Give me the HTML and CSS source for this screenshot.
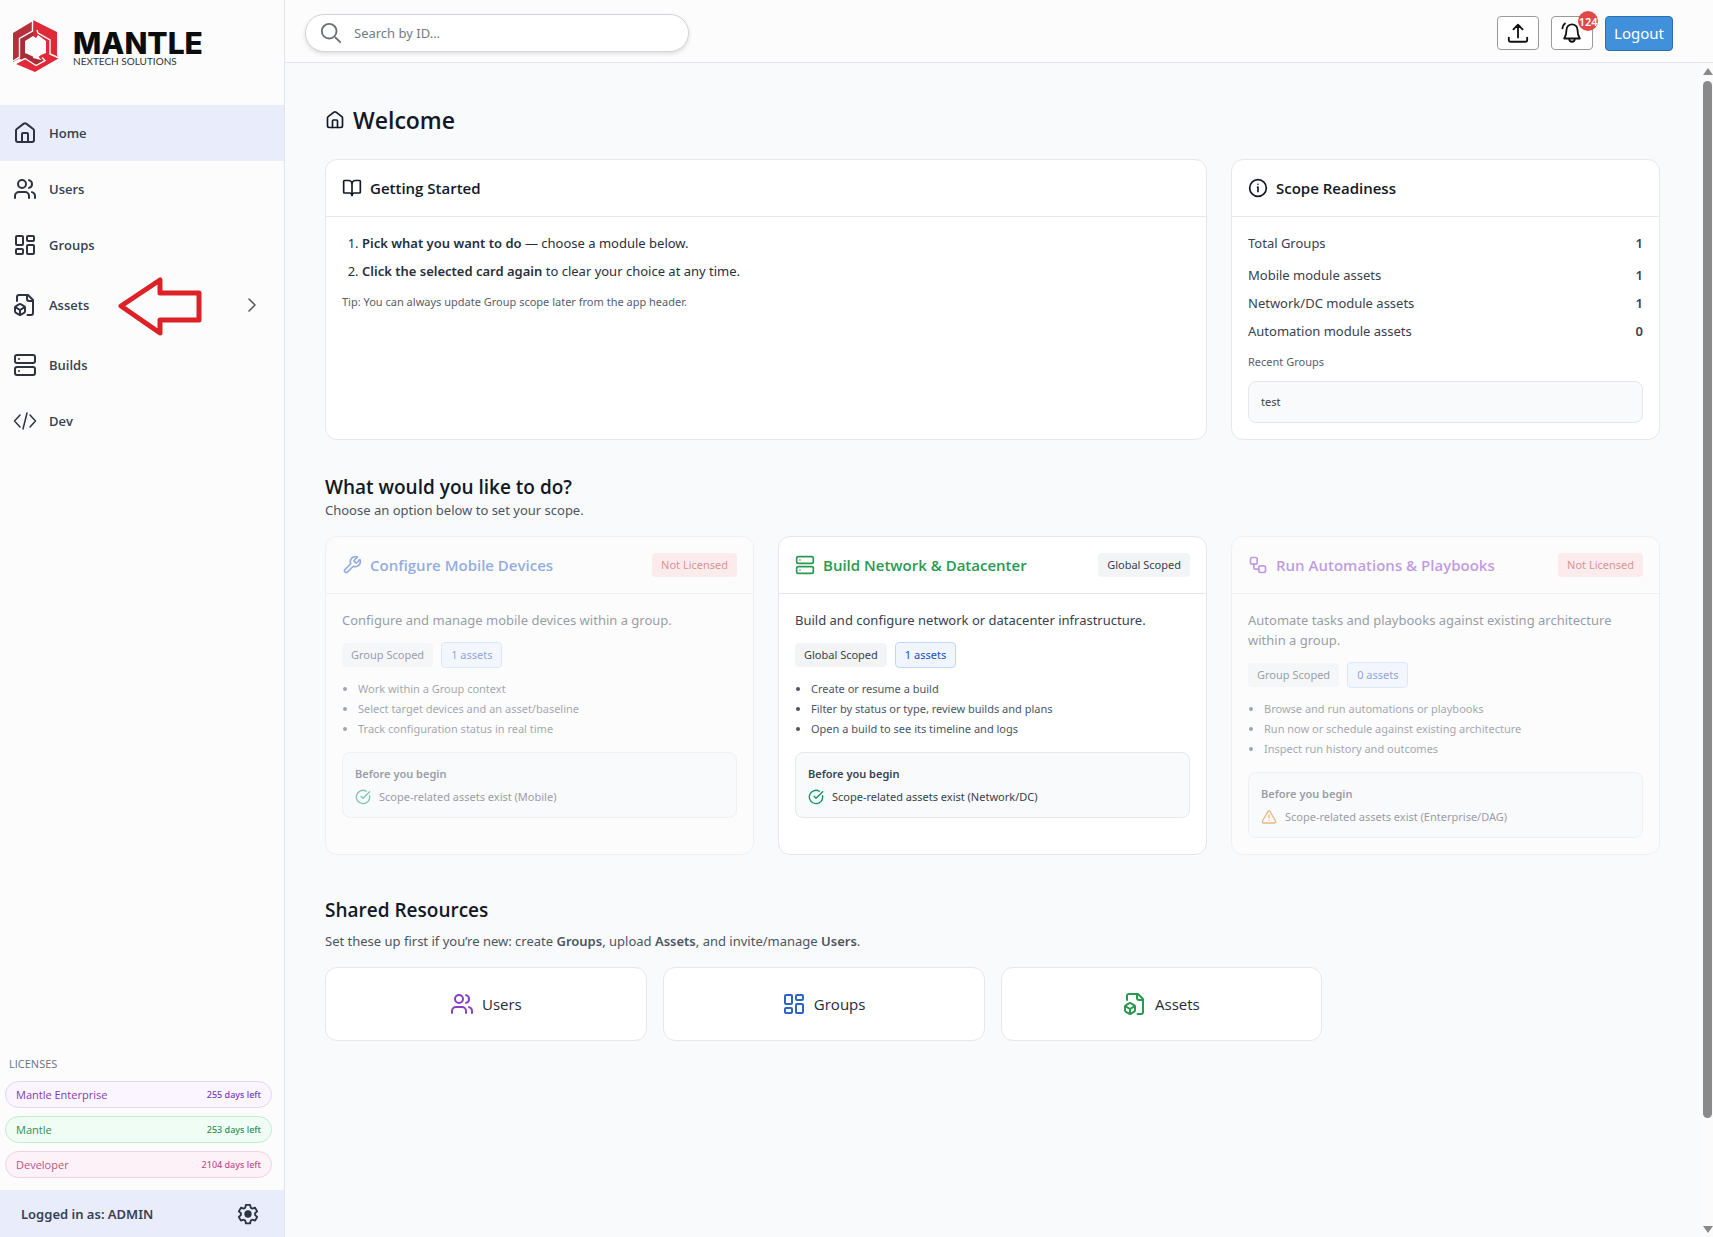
FILE: index.html
```
<!DOCTYPE html>
<html lang="en">
<head>
  <meta charset="UTF-8">
  <meta name="viewport" content="width=device-width, initial-scale=1.0">
  <title>Mantle - Home</title>
  <link rel="stylesheet" href="styles.css">
</head>
<body>
  <!-- Icon sprite -->
  <svg class="sprite" aria-hidden="true">
    <symbol id="i-home" viewBox="0 0 24 24"><path d="M3 9.6a2 2 0 0 1 .8-1.6l7-5.4a2 2 0 0 1 2.4 0l7 5.4a2 2 0 0 1 .8 1.6V19a2 2 0 0 1-2 2H5a2 2 0 0 1-2-2Z"/><path d="M9 21v-8a1 1 0 0 1 1-1h4a1 1 0 0 1 1 1v8"/></symbol>
    <symbol id="i-users" viewBox="0 0 24 24"><path d="M16 21v-2a4 4 0 0 0-4-4H6a4 4 0 0 0-4 4v2"/><circle cx="9" cy="7" r="4"/><path d="M22 21v-2a4 4 0 0 0-3-3.87"/><path d="M16 3.13a4 4 0 0 1 0 7.75"/></symbol>
    <symbol id="i-groups" viewBox="0 0 24 24"><rect width="7" height="9" x="3" y="3" rx="1"/><rect width="7" height="5" x="14" y="3" rx="1"/><rect width="7" height="9" x="14" y="12" rx="1"/><rect width="7" height="5" x="3" y="16" rx="1"/></symbol>
    <symbol id="i-assets" viewBox="0 0 24 24"><path d="M14.5 22H18a2 2 0 0 0 2-2V7l-5-5H6a2 2 0 0 0-2 2v4"/><path d="M14 2v4a2 2 0 0 0 2 2h4"/><path d="M3 13.1a2 2 0 0 0-1 1.76v3.24a2 2 0 0 0 .97 1.78L6 21.7a2 2 0 0 0 2.03.01L11 19.9a2 2 0 0 0 1-1.76V14.9a2 2 0 0 0-.97-1.78L8 11.3a2 2 0 0 0-2.03-.01Z"/><path d="M7 17v5"/><path d="M11.7 14.2 7 17l-4.7-2.8"/></symbol>
    <symbol id="i-server" viewBox="0 0 24 24"><rect width="20" height="8" x="2" y="2" rx="2"/><rect width="20" height="8" x="2" y="14" rx="2"/><path d="M6 6h.01M6 18h.01"/></symbol>
    <symbol id="i-code" viewBox="0 0 24 24"><path d="m7 6-5.500 6L7 18M17 6l5.500 6L17 18M14 4l-4 16"/></symbol>
    <symbol id="i-book" viewBox="0 0 24 24"><path d="M12 7v14"/><path d="M3 18a1 1 0 0 1-1-1V4a1 1 0 0 1 1-1h5a4 4 0 0 1 4 4 4 4 0 0 1 4-4h5a1 1 0 0 1 1 1v13a1 1 0 0 1-1 1h-6a3 3 0 0 0-3 3 3 3 0 0 0-3-3z"/></symbol>
    <symbol id="i-info" viewBox="0 0 24 24"><circle cx="12" cy="12" r="10"/><path d="M12 7.500h.01M11.500 11h.5v5.500"/></symbol>
    <symbol id="i-wrench" viewBox="0 0 24 24"><path d="M14.700 6.300a1 1 0 0 0 0 1.400l1.600 1.600a1 1 0 0 0 1.400 0l3.770-3.770a6 6 0 0 1-7.940 7.940l-6.910 6.910a2.120 2.120 0 0 1-3-3l6.910-6.910a6 6 0 0 1 7.940-7.940l-3.760 3.760z"/></symbol>
    <symbol id="i-flow" viewBox="0 0 24 24"><rect width="8" height="8" x="3" y="3" rx="2"/><path d="M7 11v4a2 2 0 0 0 2 2h4"/><rect width="8" height="8" x="13" y="13" rx="2"/></symbol>
    <symbol id="i-check" viewBox="0 0 24 24"><path d="M21.800 10A10 10 0 1 1 17 3.330"/><path d="m9 11 3 3L22 4"/></symbol>
    <symbol id="i-warn" viewBox="0 0 24 24"><path d="m21.730 18-8-14a2 2 0 0 0-3.480 0l-8 14A2 2 0 0 0 4 21h16a2 2 0 0 0 1.730-3"/><path d="M12 9v4M12 17h.01"/></symbol>
    <symbol id="i-search" viewBox="0 0 24 24"><circle cx="10" cy="10" r="8"/><path d="m17 17 5 5"/></symbol>
    <symbol id="i-upload" viewBox="0 0 24 24"><path d="M12 17V3M7 8l5-5 5 5M2 17v2.500a2 2 0 0 0 2 2h16a2 2 0 0 0 2-2V17"/></symbol>
    <symbol id="i-bell" viewBox="0 0 24 24"><path d="M12 2.500a6 6 0 0 0-6 6c0 5-.8 7-2.500 9.500h17C18.800 15.500 18 13.500 18 8.500a6 6 0 0 0-6-6Z"/><path d="M9 18.500a3 3 0 0 0 6 0M1.500 7c.2-2.200 1.200-4 2.800-5.300"/></symbol>
    <symbol id="i-gear" viewBox="0 0 24 24"><path d="M9.700 2h4.600l.7 3.100 1.700 1 3-1 2.300 4-2.300 2.100v1.900l2.300 2.100-2.300 4-3-1-1.700 1-.7 3.100H9.700L9 19.200l-1.700-1-3 1-2.300-4 2.300-2.100v-1.900L2 9.100l2.300-4 3 1 1.700-1Z"/><circle cx="12" cy="12" r="3" fill="currentColor"/></symbol>
    <symbol id="i-chevron" viewBox="0 0 24 24"><path d="m8 4 8 8-8 8"/></symbol>
  </svg>

  <!-- Sidebar -->
  <aside class="sidebar">
    <a class="brand" href="#">
      <svg class="brand-mark" viewBox="0 0 48 54" aria-hidden="true">
        <path fill="#b5303a" d="M21 1v30L1 42V13Z"/>
        <path fill="#dc2a36" d="M21 0l24 12v23l2 3-13 7-13-14Z"/>
        <path fill="#ab2c36" d="M8 18l13-7v27l12 3-10 6-15-8Z"/>
        <path fill="#e3283a" d="M4 44l9-5 11 7 9-5 1-3h13v0L23 52Z"/>
        <path fill="#fcfcfd" d="M21 16l3 2 2-3 8 6v12l-5 2-4 3-3-1-9-4V21Z"/>
        <path fill="none" stroke="#fcfcfd" stroke-width="1.4" d="M20.500 0v11L7.500 18.500V37L1 41M25 10l1 3 12 7v14l9 4M3 43.500l10-5 11 7 9-5-3-3"/>
      </svg>
      <span class="brand-text">
        <span class="brand-name">MANTLE</span>
        <span class="brand-sub">NEXTECH SOLUTIONS</span>
      </span>
    </a>

    <nav class="nav">
      <a class="nav-item active" href="#"><svg class="icon"><use href="#i-home"/></svg>Home</a>
      <a class="nav-item" href="#"><svg class="icon"><use href="#i-users"/></svg>Users</a>
      <a class="nav-item" href="#"><svg class="icon"><use href="#i-groups"/></svg>Groups</a>
      <a class="nav-item nav-parent" href="#">
        <svg class="icon"><use href="#i-assets"/></svg>Assets
        <svg class="nav-arrow" viewBox="0 0 86 60" aria-hidden="true"><path d="M4 30 43 4v13h39v27H43v13Z"/></svg>
        <svg class="icon nav-chevron"><use href="#i-chevron"/></svg>
      </a>
      <a class="nav-item" href="#"><svg class="icon"><use href="#i-server"/></svg>Builds</a>
      <a class="nav-item" href="#"><svg class="icon thin"><use href="#i-code"/></svg>Dev</a>
    </nav>

    <section class="licenses">
      <h2>LICENSES</h2>
      <div class="license purple"><span>Mantle Enterprise</span><small>255 days left</small></div>
      <div class="license green"><span>Mantle</span><small>253 days left</small></div>
      <div class="license pink"><span>Developer</span><small>2104 days left</small></div>
    </section>

    <footer class="account">
      <span>Logged in as: ADMIN</span>
      <button class="gear" aria-label="Settings"><svg class="icon"><use href="#i-gear"/></svg></button>
    </footer>
  </aside>

  <div class="page">
    <header class="topbar">
      <label class="search">
        <svg class="icon"><use href="#i-search"/></svg>
        <input type="text" placeholder="Search by ID..." aria-label="Search by ID">
      </label>
      <div class="actions">
        <button class="icon-btn" aria-label="Upload"><svg class="icon"><use href="#i-upload"/></svg></button>
        <button class="icon-btn" aria-label="Notifications"><svg class="icon"><use href="#i-bell"/></svg><span class="badge">124</span></button>
        <button class="logout">Logout</button>
      </div>
    </header>

    <div class="scroller">
      <main class="content">
        <h1><svg class="icon"><use href="#i-home"/></svg>Welcome</h1>

        <div class="grid">
          <section class="card wide">
            <div class="card-head"><h3><svg class="icon"><use href="#i-book"/></svg>Getting Started</h3></div>
            <div class="card-body">
              <ol class="steps">
                <li><strong>Pick what you want to do</strong> — choose a module below.</li>
                <li><strong>Click the selected card again</strong> to clear your choice at any time.</li>
              </ol>
              <p class="note">Tip: You can always update Group scope later from the app header.</p>
            </div>
          </section>

          <section class="card">
            <div class="card-head"><h3><svg class="icon"><use href="#i-info"/></svg>Scope Readiness</h3></div>
            <div class="card-body">
              <dl class="stats">
                <div class="total"><dt>Total Groups</dt><dd>1</dd></div>
                <div><dt>Mobile module assets</dt><dd>1</dd></div>
                <div><dt>Network/DC module assets</dt><dd>1</dd></div>
                <div><dt>Automation module assets</dt><dd>0</dd></div>
              </dl>
              <p class="note">Recent Groups</p>
              <div class="recent">test</div>
            </div>
          </section>
        </div>

        <h2 class="section-title">What would you like to do?</h2>
        <p class="lead">Choose an option below to set your scope.</p>

        <div class="grid modules">
          <section class="card disabled">
            <div class="card-head">
              <h3 class="blue"><svg class="icon"><use href="#i-wrench"/></svg>Configure Mobile Devices</h3>
              <span class="tag red">Not Licensed</span>
            </div>
            <div class="card-body">
              <p>Configure and manage mobile devices within a group.</p>
              <div class="tags"><span class="tag">Group Scoped</span><span class="tag count">1 assets</span></div>
              <ul class="features">
                <li>Work within a Group context</li>
                <li>Select target devices and an asset/baseline</li>
                <li>Track configuration status in real time</li>
              </ul>
              <div class="before">
                <h4>Before you begin</h4>
                <p><svg class="icon ok"><use href="#i-check"/></svg>Scope-related assets exist (Mobile)</p>
              </div>
            </div>
          </section>

          <section class="card">
            <div class="card-head">
              <h3 class="green"><svg class="icon"><use href="#i-server"/></svg>Build Network &amp; Datacenter</h3>
              <span class="tag">Global Scoped</span>
            </div>
            <div class="card-body">
              <p>Build and configure network or datacenter infrastructure.</p>
              <div class="tags"><span class="tag">Global Scoped</span><span class="tag count">1 assets</span></div>
              <ul class="features">
                <li>Create or resume a build</li>
                <li>Filter by status or type, review builds and plans</li>
                <li>Open a build to see its timeline and logs</li>
              </ul>
              <div class="before">
                <h4>Before you begin</h4>
                <p><svg class="icon ok"><use href="#i-check"/></svg>Scope-related assets exist (Network/DC)</p>
              </div>
            </div>
          </section>

          <section class="card disabled">
            <div class="card-head">
              <h3 class="purple"><svg class="icon"><use href="#i-flow"/></svg>Run Automations &amp; Playbooks</h3>
              <span class="tag red">Not Licensed</span>
            </div>
            <div class="card-body">
              <p>Automate tasks and playbooks against existing architecture within a group.</p>
              <div class="tags"><span class="tag">Group Scoped</span><span class="tag count">0 assets</span></div>
              <ul class="features">
                <li>Browse and run automations or playbooks</li>
                <li>Run now or schedule against existing architecture</li>
                <li>Inspect run history and outcomes</li>
              </ul>
              <div class="before">
                <h4>Before you begin</h4>
                <p><svg class="icon warn"><use href="#i-warn"/></svg>Scope-related assets exist (Enterprise/DAG)</p>
              </div>
            </div>
          </section>
        </div>

        <h2 class="section-title shared">Shared Resources</h2>
        <p class="lead">Set these up first if you’re new: create <strong>Groups</strong>, upload <strong>Assets</strong>, and invite/manage <strong>Users</strong>.</p>

        <div class="tiles">
          <a class="tile" href="#"><svg class="icon purple"><use href="#i-users"/></svg>Users</a>
          <a class="tile" href="#"><svg class="icon blue"><use href="#i-groups"/></svg>Groups</a>
          <a class="tile" href="#"><svg class="icon green"><use href="#i-assets"/></svg>Assets</a>
        </div>
      </main>

      <div class="scrollbar" aria-hidden="true">
        <span class="scroll-up"></span>
        <span class="scroll-thumb"></span>
        <span class="scroll-down"></span>
      </div>
    </div>
  </div>
</body>
</html>
```
FILE: styles.css
```
* {
  box-sizing: border-box;
}

body {
  margin: 0;
  min-height: 100vh;
  display: flex;
  font-family: "Noto Sans", "Open Sans", sans-serif;
  font-size: 13px;
  line-height: 20px;
  color: #374151;
  background-color: #f9fafc;
}

h1, h2, h3, h4, p, ul, ol, dl, dd {
  margin: 0;
  padding: 0;
}

h1, h2, h3 {
  font-family: "Open Sans", sans-serif;
}

a {
  color: inherit;
  text-decoration: none;
}

button, input {
  font-family: inherit;
}

strong {
  font-weight: 600;
}

.sprite {
  position: absolute;
  width: 0;
  height: 0;
}

.icon {
  width: 24px;
  height: 24px;
  flex-shrink: 0;
  fill: none;
  stroke: currentColor;
  stroke-width: 2;
  stroke-linecap: round;
  stroke-linejoin: round;
}

.icon.thin {
  stroke-width: 1.5;
}

/* Sidebar */
.sidebar {
  width: 285px;
  flex-shrink: 0;
  display: flex;
  flex-direction: column;
  background-color: #fcfcfd;
  border-right: 1px solid #e2e4ea;
}

.brand {
  height: 105px;
  padding: 20px 12px;
  display: flex;
  align-items: flex-start;
  gap: 13px;
}

.brand-mark {
  width: 48px;
  height: 54px;
}

.brand-text {
  display: flex;
  flex-direction: column;
  padding-top: 8px;
}

.brand-name {
  font-family: Inter, sans-serif;
  font-size: 30px;
  font-weight: 800;
  line-height: 30px;
  color: #0a0d0d;
}

.brand-sub {
  font-family: Lato, sans-serif;
  font-size: 10px;
  line-height: 6px;
  color: #333;
}

.nav-item {
  position: relative;
  height: 56px;
  padding: 0 13px;
  display: flex;
  align-items: center;
  gap: 12px;
  font-family: "Open Sans", sans-serif;
  font-weight: 600;
  color: #374151;
}

.nav-item .icon {
  color: #2d3340;
}

.nav-item.active {
  background-color: #e9ecfb;
}

.nav-parent {
  height: 64px;
}

.nav-item .nav-chevron {
  width: 18px;
  height: 18px;
  margin-left: auto;
  margin-right: 10px;
  color: #555;
}

/* Pointer laid over the Assets entry */
.nav-arrow {
  position: absolute;
  left: 117px;
  top: 3px;
  width: 86px;
  height: 60px;
  fill: none;
  stroke: #dc2127;
  stroke-width: 5;
  stroke-linejoin: round;
}

.licenses {
  margin-top: auto;
  padding: 0 12px 12px 5px;
  display: flex;
  flex-direction: column;
  gap: 8px;
  font-family: "Open Sans", sans-serif;
}

.licenses h2 {
  padding-left: 4px;
  font-size: 11px;
  font-weight: 400;
  line-height: 18px;
  color: #6b7280;
}

.license {
  height: 27px;
  padding: 0 10px;
  display: flex;
  align-items: center;
  justify-content: space-between;
  border: 1px solid;
  border-radius: 14px;
  font-size: 11px;
  font-weight: 500;
}

.license small {
  font-family: "Noto Sans", sans-serif;
  font-size: 9px;
}

.license.purple {
  color: #7e3bb8;
  background-color: #faf5ff;
  border-color: #e6d3f8;
}

.license.green {
  color: #2f8f57;
  background-color: #f0fdf4;
  border-color: #bfeccd;
}

.license.pink {
  color: #c2508a;
  background-color: #fdf2f8;
  border-color: #f6cfe2;
}

.account {
  height: 47px;
  padding: 0 25px 0 21px;
  display: flex;
  align-items: center;
  justify-content: space-between;
  background-color: #e9ecfb;
  font-weight: 600;
}

.gear {
  padding: 0;
  display: flex;
  background: none;
  border: none;
  color: #2d3340;
  cursor: pointer;
}

.gear .icon {
  width: 22px;
  height: 22px;
}

/* Top bar */
.page {
  flex: 1;
  min-width: 0;
  display: flex;
  flex-direction: column;
}

.topbar {
  height: 63px;
  padding: 4px 40px 0 20px;
  display: flex;
  align-items: center;
  justify-content: space-between;
  background-color: #fcfcfd;
  border-bottom: 1px solid #e2e5e9;
}

.search {
  width: 384px;
  height: 38px;
  padding: 0 14px;
  display: flex;
  align-items: center;
  gap: 10px;
  background-color: #fff;
  border: 1px solid #d1d5db;
  border-radius: 19px;
  box-shadow: 0 2px 4px rgba(0, 0, 0, 0.12);
  color: #6b6f76;
}

.search .icon {
  width: 22px;
  height: 22px;
}

.search input {
  flex: 1;
  min-width: 0;
  border: none;
  outline: none;
  background: none;
  font-size: 13px;
}

.search input::placeholder {
  color: #757b85;
}

.actions {
  display: flex;
  align-items: center;
  gap: 12px;
}

.icon-btn {
  position: relative;
  width: 42px;
  height: 34px;
  padding: 0;
  display: flex;
  align-items: center;
  justify-content: center;
  background-color: #fff;
  border: 1px solid #9a9a9a;
  border-radius: 4px;
  color: #111;
  cursor: pointer;
}

.icon-btn .icon {
  width: 22px;
  height: 22px;
}

.badge {
  position: absolute;
  top: -6px;
  right: -6px;
  width: 20px;
  height: 20px;
  display: flex;
  align-items: center;
  justify-content: center;
  border-radius: 50%;
  background-color: #e04848;
  color: #fff;
  font-size: 11px;
  font-weight: 600;
}

.logout {
  height: 35px;
  padding: 0 8px;
  background-color: #4190dc;
  border: 1px solid #2b6fb3;
  border-radius: 4px;
  color: #fff;
  font-size: 15px;
  cursor: pointer;
}

/* Content */
.scroller {
  flex: 1;
  display: flex;
}

.content {
  flex: 1;
  min-width: 0;
  padding: 40px;
}

h1 {
  display: flex;
  align-items: center;
  gap: 8px;
  margin-bottom: 22px;
  font-size: 23px;
  font-weight: 600;
  line-height: 34px;
  color: #111827;
}

h1 .icon {
  width: 20px;
  height: 20px;
}

.grid {
  display: grid;
  grid-template-columns: repeat(3, 1fr);
  gap: 24px;
}

.wide {
  grid-column: span 2;
}

.card {
  background-color: #fff;
  border: 1px solid #e5e7eb;
  border-radius: 12px;
}

.card.disabled {
  opacity: 0.5;
}

.card-head {
  height: 57px;
  padding: 0 16px;
  display: flex;
  align-items: center;
  justify-content: space-between;
  border-bottom: 1px solid #e5e7eb;
}

h3 {
  display: flex;
  align-items: center;
  gap: 8px;
  font-size: 15px;
  font-weight: 600;
  line-height: 24px;
  color: #111827;
}

h3 .icon {
  width: 20px;
  height: 20px;
}

.blue {
  color: #2f63c4;
}

.green {
  color: #289a50;
}

.purple {
  color: #8b3fc4;
}

.card-body {
  padding: 16px;
}

.steps {
  padding-left: 20px;
  color: #27303d;
}

.steps li + li {
  margin-top: 8px;
}

.note {
  margin-top: 12px;
  font-size: 11px;
  line-height: 18px;
  color: #565e6b;
}

.stats div {
  display: flex;
  justify-content: space-between;
  margin-top: 8px;
}

.stats .total {
  margin: 0 0 12px;
}

.stats dd {
  font-weight: 600;
}

.recent {
  margin-top: 10px;
  padding: 12px;
  font-size: 11px;
  line-height: 16px;
  background-color: #f9fafb;
  border: 1px solid #e5e7eb;
  border-radius: 8px;
}

.section-title {
  margin-top: 34px;
  font-size: 19px;
  font-weight: 600;
  line-height: 26px;
  color: #111827;
}

.section-title.shared {
  margin: 42px 0 8px;
}

.lead {
  margin-bottom: 16px;
  color: #4b5563;
}

.tag {
  padding: 4px 9px;
  font-size: 11px;
  line-height: 16px;
  background-color: #f3f4f6;
  border-radius: 4px;
}

.tag.red {
  background-color: #fddede;
  color: #b92c2c;
}

.tag.count {
  background-color: #eff6ff;
  border: 1px solid #bfd7fb;
  color: #1d4cb8;
}

.tags {
  margin: 12px 0;
  display: flex;
  align-items: center;
  gap: 8px;
}

.features {
  padding-left: 16px;
  font-size: 11px;
  line-height: 18px;
  color: #4b5563;
}

.features li + li {
  margin-top: 2px;
}

.before {
  margin-top: 14px;
  padding: 12px;
  font-size: 11px;
  line-height: 16px;
  background-color: #f9fafb;
  border: 1px solid #e5e7eb;
  border-radius: 8px;
}

.before h4 {
  margin-bottom: 6px;
  font-size: 11px;
  font-weight: 600;
  line-height: 18px;
}

.before p {
  display: flex;
  gap: 8px;
}

.before .icon {
  width: 16px;
  height: 16px;
}

.ok {
  color: #0f9560;
}

.warn {
  color: #d97a06;
}

.tiles {
  display: grid;
  grid-template-columns: repeat(4, 1fr);
  gap: 16px;
}

.tile {
  height: 74px;
  display: flex;
  align-items: center;
  justify-content: center;
  gap: 8px;
  background-color: #fff;
  border: 1px solid #e5e7eb;
  border-radius: 12px;
  font-family: "Open Sans", sans-serif;
  font-size: 15px;
  color: #1f2937;
}

/* Scroll track beside the content */
.scrollbar {
  width: 13px;
  padding: 5px 1px 4px 3px;
  display: flex;
  flex-direction: column;
  align-items: center;
  gap: 6px;
  background-color: #fbfbfc;
}

.scroll-up {
  border: 5px solid transparent;
  border-top: none;
  border-bottom: 7px solid #8a8a8a;
}

.scroll-thumb {
  width: 9px;
  flex: 0 0 89%;
  border-radius: 5px;
  background-color: #8a8a8a;
}

.scroll-down {
  margin-top: auto;
  border: 5px solid transparent;
  border-bottom: none;
  border-top: 7px solid #8a8a8a;
}
```
